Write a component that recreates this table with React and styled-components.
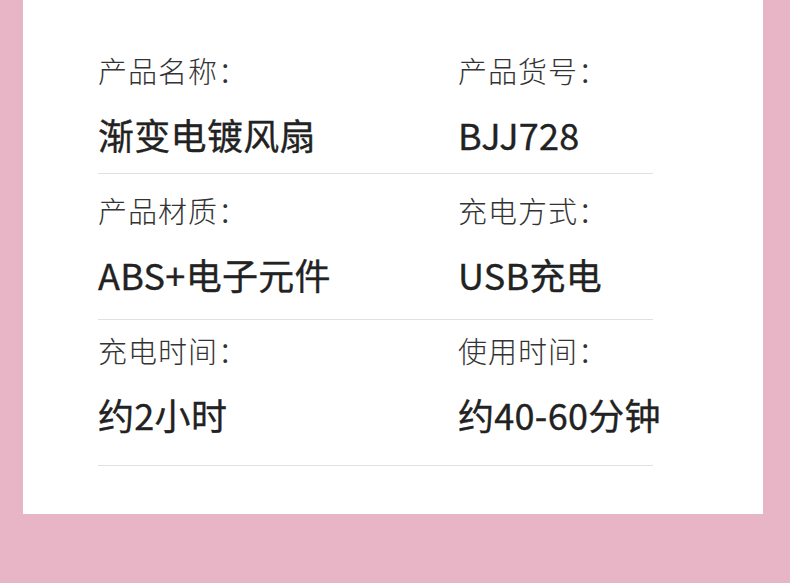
import React from "react";
import styled, { createGlobalStyle } from "styled-components";

const GlobalStyle = createGlobalStyle`
  html, body {
    margin: 0;
    padding: 0;
    background: #e8b5c7;
  }
  body {
    font-family: "Noto Sans CJK SC", "Noto Sans", sans-serif;
  }
`;

const Page = styled.div`
  width: 790px;
  height: 583px;
  background: #e8b5c7;
  overflow: hidden;
`;

const Card = styled.div`
  margin-left: 23px;
  width: 740px;
  height: 514px;
  box-sizing: border-box;
  background: #fff;
  padding: 50px 0 0 75px;
`;

const Row = styled.div`
  width: 555px;
  display: grid;
  grid-template-columns: 360px 1fr;
  padding-bottom: ${(p) => p.$below}px;
  margin-bottom: ${(p) => p.$after}px;
  border-bottom: 1px solid #e0e0e0;
`;

const Item = styled.div`
  display: flex;
  flex-direction: column;
  gap: 19px;
`;

const Label = styled.div`
  font-size: 29px;
  line-height: 40px;
  letter-spacing: 1px;
  font-weight: 300;
  color: #333;
  white-space: nowrap;
`;

const Value = styled.div`
  font-size: 36px;
  line-height: 50px;
  font-weight: 400;
  letter-spacing: 0.3px;
  -webkit-text-stroke: 0.35px #222;
  color: #222;
  white-space: nowrap;
`;

const rows = [
  {
    below: 14,
    after: 16,
    items: [
      ["产品名称：", "渐变电镀风扇"],
      ["产品货号：", "BJJ728"],
    ],
  },
  {
    below: 20,
    after: 10,
    items: [
      ["产品材质：", "ABS+电子元件"],
      ["充电方式：", "USB充电"],
    ],
  },
  {
    below: 26,
    after: 0,
    items: [
      ["充电时间：", "约2小时"],
      ["使用时间：", "约40-60分钟"],
    ],
  },
];

export default function App() {
  return (
    <Page>
      <GlobalStyle />
      <Card>
        {rows.map((row, i) => (
          <Row key={i} $below={row.below} $after={row.after}>
            {row.items.map(([label, value]) => (
              <Item key={label}>
                <Label>{label}</Label>
                <Value>{value}</Value>
              </Item>
            ))}
          </Row>
        ))}
      </Card>
    </Page>
  );
}
